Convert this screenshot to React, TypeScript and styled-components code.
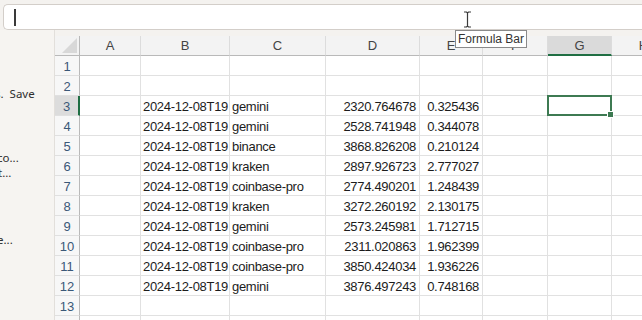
import React from "react";
import styled, { createGlobalStyle } from "styled-components";

const rows: [string, string, string, string][] = [
  ["2024-12-08T19", "gemini", "2320.764678", "0.325436"],
  ["2024-12-08T19", "gemini", "2528.741948", "0.344078"],
  ["2024-12-08T19", "binance", "3868.826208", "0.210124"],
  ["2024-12-08T19", "kraken", "2897.926723", "2.777027"],
  ["2024-12-08T19", "coinbase-pro", "2774.490201", "1.248439"],
  ["2024-12-08T19", "kraken", "3272.260192", "2.130175"],
  ["2024-12-08T19", "gemini", "2573.245981", "1.712715"],
  ["2024-12-08T19", "coinbase-pro", "2311.020863", "1.962399"],
  ["2024-12-08T19", "coinbase-pro", "3850.424034", "1.936226"],
  ["2024-12-08T19", "gemini", "3876.497243", "0.748168"],
];

const columns = ["A", "B", "C", "D", "E", "F", "G", "H"];
const activeCol = "G";
const activeRow = 3;

function App() {
  const renderRow = (n: number) => {
    const data = n >= 3 && n <= 12 ? rows[n - 3] : null;
    return (
      <React.Fragment key={n}>
        <RowHeader $active={n === activeRow}>{n}</RowHeader>
        <Cell />
        <Cell>{data && <TextValue>{data[0]}</TextValue>}</Cell>
        <Cell>{data && <TextValue>{data[1]}</TextValue>}</Cell>
        <Cell>{data && <NumValue>{data[2]}</NumValue>}</Cell>
        <Cell>{data && <NumValue>{data[3]}</NumValue>}</Cell>
        <Cell />
        {n === activeRow ? <SelectedCell /> : <Cell />}
        <Cell />
      </React.Fragment>
    );
  };

  return (
    <>
      <GlobalStyle />
      <Window>
        <FormulaArea>
          <FormulaBox>
            <Caret />
          </FormulaBox>
        </FormulaArea>
        <Body>
          <SidePanel>
            <PanelItem $gap={56} $shift={-5}>
              s.&nbsp; Save
            </PanelItem>
            <PanelItem $gap={49} $shift={-3}>
              co...
            </PanelItem>
            <PanelItem $gap={0} $shift={-2}>
              t...
            </PanelItem>
            <PanelItem $gap={52} $shift={-3}>
              e...
            </PanelItem>
          </SidePanel>
          <Sheet>
            <Grid>
              <Corner>
                <CornerMark />
              </Corner>
              {columns.map((c) => (
                <ColHeader key={c} $active={c === activeCol}>
                  {c}
                </ColHeader>
              ))}
              {Array.from({ length: 14 }, (_, i) => renderRow(i + 1))}
            </Grid>
          </Sheet>
        </Body>
        <IBeam width="9" height="17" viewBox="0 0 9 17">
          <path
            d="M1 1h2.5l1 1 1-1H8M4.5 2v13M1 16h2.5l1-1 1 1H8"
            fill="none"
            stroke="#3a3a3a"
            strokeWidth="1.2"
          />
        </IBeam>
        <Tooltip>Formula Bar</Tooltip>
      </Window>
    </>
  );
}

const GlobalStyle = createGlobalStyle`
  html, body {
    margin: 0;
    padding: 0;
    width: 642px;
    height: 320px;
    overflow: hidden;
    background: #f4f2ef;
  }
  #root {
    height: 320px;
  }
`;

const Window = styled.div`
  position: relative;
  width: 642px;
  height: 320px;
  display: flex;
  flex-direction: column;
  overflow: hidden;
  font-family: "Liberation Sans", Arial, sans-serif;
`;

const FormulaArea = styled.div`
  padding: 4px 0 0 3px;
  height: 26px;
`;

const FormulaBox = styled.div`
  height: 26px;
  box-sizing: border-box;
  background: #ffffff;
  border: 1px solid #d3cec9;
  border-right: none;
  border-radius: 5px 0 0 5px;
  display: flex;
  align-items: center;
  padding-left: 10px;
`;

const Caret = styled.span`
  width: 2px;
  height: 17px;
  background: #3a3a3a;
`;

const Body = styled.div`
  flex: 1;
  display: flex;
  min-height: 0;
`;

const SidePanel = styled.aside`
  width: 54px;
  flex-shrink: 0;
  background: #f6f4f1;
  border-right: 1px solid #e2dfdb;
  display: flex;
  flex-direction: column;
  overflow: hidden;
  font-family: "Noto Sans", "Open Sans", sans-serif;
  font-size: 11.5px;
  color: #2e2e2e;
`;

const PanelItem = styled.div<{ $gap: number; $shift: number }>`
  margin-top: ${(p) => p.$gap}px;
  margin-left: ${(p) => p.$shift}px;
  line-height: 15px;
  white-space: nowrap;
`;

const Sheet = styled.section`
  flex: 1;
  min-width: 0;
  padding-top: 6px;
  overflow: hidden;
`;

const Grid = styled.div`
  display: grid;
  grid-template-columns: 25px 61px 89px 96px 94px 63px 65px 64px 64px;
  grid-auto-rows: 20px;
  font-size: 13px;
  color: #1c1c1c;
`;

const Corner = styled.div`
  background: #f3f3f3;
  border-bottom: 1px solid #b9b9b9;
  border-right: 1px solid #b9b9b9;
  box-sizing: border-box;
  display: flex;
  align-items: flex-end;
  justify-content: flex-end;
  padding: 0 2px 2px 0;
`;

const CornerMark = styled.span`
  width: 15px;
  height: 15px;
  background: #d8d8d8;
  clip-path: polygon(100% 0, 100% 100%, 0 100%);
`;

const ColHeader = styled.div<{ $active?: boolean }>`
  box-sizing: border-box;
  background: ${(p) => (p.$active ? "#dadada" : "#f3f3f3")};
  border-right: 1px solid #dcdcdc;
  border-bottom: ${(p) => (p.$active ? "2px solid #1f6e43" : "1px solid #b9b9b9")};
  color: #444;
  display: flex;
  align-items: center;
  justify-content: center;
`;

const RowHeader = styled.div<{ $active?: boolean }>`
  box-sizing: border-box;
  background: ${(p) => (p.$active ? "#dcdcdc" : "#f7f7f7")};
  border-bottom: 1px solid #e0e0e0;
  border-right: ${(p) => (p.$active ? "2px solid #1f6e43" : "1px solid #b9b9b9")};
  color: #3b5878;
  display: flex;
  align-items: center;
  justify-content: center;
  padding-top: 1px;
`;

const Cell = styled.div`
  box-sizing: border-box;
  background: #ffffff;
  border-right: 1px solid #e1e1e1;
  border-bottom: 1px solid #e1e1e1;
  display: flex;
  align-items: center;
  overflow: hidden;
  min-width: 0;
`;

const SelectedCell = styled(Cell)`
  position: relative;
  overflow: visible;
  border: 2px solid #3d7a52;
  margin: -1px 0 0 -1px;
  height: 21px;

  &::after {
    content: "";
    position: absolute;
    right: -4px;
    bottom: -4px;
    width: 5px;
    height: 5px;
    background: #3d7a52;
    border: 1px solid #fff;
  }
`;

const TextValue = styled.span`
  padding: 1px 0 0 2px;
  white-space: nowrap;
  letter-spacing: -0.3px;
`;

const NumValue = styled.span`
  flex: 1;
  text-align: right;
  padding: 1px 3px 0 0;
  white-space: nowrap;
  letter-spacing: -0.3px;
`;

const IBeam = styled.svg`
  position: absolute;
  left: 463px;
  top: 11px;
`;

const Tooltip = styled.div`
  position: absolute;
  left: 455px;
  top: 30px;
  height: 18px;
  box-sizing: border-box;
  padding: 0 2px;
  background: #ffffff;
  border: 1px solid #8a8a8a;
  font-size: 12px;
  line-height: 16px;
  color: #333;
  white-space: nowrap;
`;

export default App;
